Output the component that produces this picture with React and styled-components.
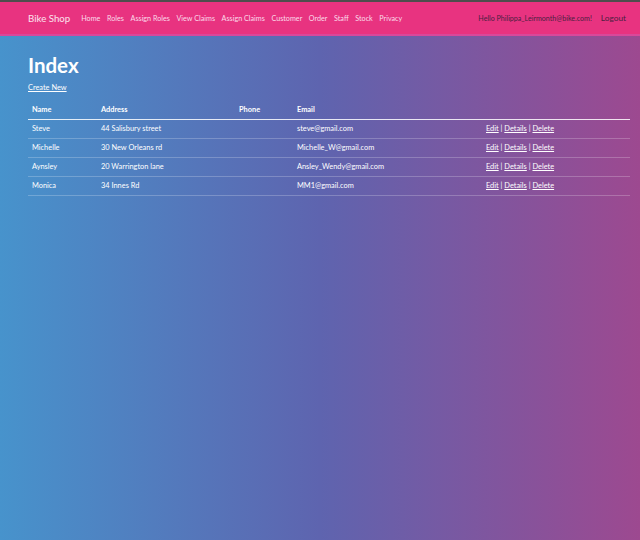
import React from "react";
import styled, { createGlobalStyle } from "styled-components";

const Global = createGlobalStyle`
  html, body { margin: 0; padding: 0; }
  body {
    min-height: 100vh;
    font-family: "Lato", "Noto Sans", sans-serif;
    background: linear-gradient(to right, #4793cc 0%, #5e64af 50%, #9d4990 100%);
    background-attachment: fixed;
    color: #fff;
  }
`;

const Nav = styled.header`
  height: 32px;
  border-top: 2px solid #4d4d4d;
  border-bottom: 2px solid #d9489a;
  background: #e83380;
  display: flex;
  align-items: center;
  padding: 0 14px 0 28px;
  box-sizing: content-box;
`;

const Brand = styled.a`
  font-size: 9.7px;
  color: #fbe3ee;
  margin-right: 11px;
  text-decoration: none;
`;

const Links = styled.nav`
  display: flex;
  gap: 6.6px;
  flex: 1;
`;

const NavLink = styled.a`
  font-size: 7.2px;
  color: #fbdbe9;
  text-decoration: none;
`;

const Hello = styled.span`
  font-size: 7.1px;
  color: #4a2040;
  margin-right: 9px;
`;

const Logout = styled.a`
  font-size: 8.3px;
  color: #4a2040;
  text-decoration: none;
`;

const Main = styled.main`
  padding: 17px 10px 0 28px;
`;

const Title = styled.h1`
  font-size: 20.5px;
  font-weight: 700;
  margin: 0 0 6px;
  line-height: 24px;
`;

const CreateLink = styled.a`
  display: block;
  width: max-content;
  font-size: 7.4px;
  line-height: 10px;
  color: #fff;
  text-decoration: underline;
  margin-bottom: 8px;
`;

const Table = styled.table`
  width: 100%;
  border-collapse: collapse;
  table-layout: fixed;
  font-size: 7.4px;
  line-height: 10px;
`;

const Th = styled.th`
  text-align: left;
  font-weight: 700;
  padding: 4px 4px 4px;
  border-bottom: 1.5px solid rgba(255, 255, 255, 0.85);
  width: ${(p) => p.$w || "auto"};
`;

const Td = styled.td`
  padding: 4px 4px 4px;
  border-bottom: 1px solid rgba(255, 255, 255, 0.22);
  color: #fff;
  white-space: nowrap;
`;

const ActionLink = styled.a`
  color: #fff;
  text-decoration: underline;
`;

const rows = [
  ["Steve", "44 Salisbury street", "", "steve@gmail.com"],
  ["Michelle", "30 New Orleans rd", "", "Michelle_W@gmail.com"],
  ["Aynsley", "20 Warrington lane", "", "Ansley_Wendy@gmail.com"],
  ["Monica", "34 Innes Rd", "", "MM1@gmail.com"],
];

const navItems = ["Home", "Roles", "Assign Roles", "View Claims", "Assign Claims", "Customer", "Order", "Staff", "Stock", "Privacy"];

export default function App() {
  return (
    <>
      <Global />
      <Nav>
        <Brand>Bike Shop</Brand>
        <Links>
          {navItems.map((n) => (
            <NavLink key={n}>{n}</NavLink>
          ))}
        </Links>
        <Hello>Hello Philippa_Leirmonth@bike.com!</Hello>
        <Logout>Logout</Logout>
      </Nav>
      <Main>
        <Title>Index</Title>
        <CreateLink>Create New</CreateLink>
        <Table>
          <thead>
            <tr>
              <Th $w="61px">Name</Th>
              <Th $w="130px">Address</Th>
              <Th $w="50px">Phone</Th>
              <Th $w="181px">Email</Th>
              <Th></Th>
            </tr>
          </thead>
          <tbody>
            {rows.map((r) => (
              <tr key={r[0]}>
                <Td>{r[0]}</Td>
                <Td>{r[1]}</Td>
                <Td>{r[2]}</Td>
                <Td>{r[3]}</Td>
                <Td>
                  <ActionLink>Edit</ActionLink> | <ActionLink>Details</ActionLink> | <ActionLink>Delete</ActionLink>
                </Td>
              </tr>
            ))}
          </tbody>
        </Table>
      </Main>
    </>
  );
}
